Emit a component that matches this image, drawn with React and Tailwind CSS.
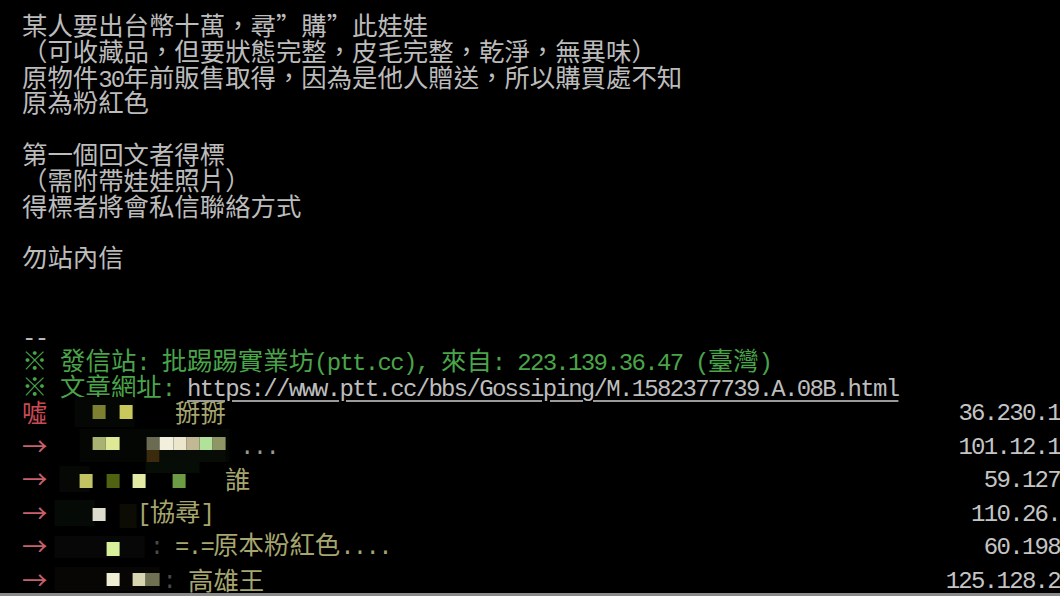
const ASCII = /^[\x20-\x7e]+$/;

// splits a line into CJK runs and half-width ASCII runs
function T({ s }) {
  return s
    .split(/([\x20-\x7e]+)/)
    .filter(Boolean)
    .map((p, i) =>
      ASCII.test(p) ? (
        <span key={i} className="font-['Liberation_Mono',monospace] text-[24px] tracking-[-1.7px]">
          {p}
        </span>
      ) : (
        <span key={i}>{p}</span>
      )
    );
}

const Line = ({ s, className = "" }) => (
  <div className={`h-[25.8px] whitespace-pre ${className}`}>{s ? <T s={s} /> : null}</div>
);

const body = [
  "某人要出台幣十萬，尋”購”此娃娃",
  "（可收藏品，但要狀態完整，皮毛完整，乾淨，無異味）",
  "原物件30年前販售取得，因為是他人贈送，所以購買處不知",
  "原為粉紅色",
  "",
  "第一個回文者得標",
  "（需附帶娃娃照片）",
  "得標者將會私信聯絡方式",
  "",
  "勿站內信",
  "",
  "",
];

// mosaic blocks over the user ids: [pageX, y, w, h, colour]
const pushes = [
  {
    tag: "噓",
    tagColor: "text-[#c84a55]",
    end: 175,
    blocks: [
      [75, 2, 60, 30, "#040704"],
      [93, 10, 13, 14, "#7c8030"],
      [120, 10, 13, 14, "#c8c85c"],
    ],
    colon: "",
    text: "掰掰",
    textColor: "text-[#a6a66e]",
    ip: "36.230.1",
  },
  {
    tag: "→",
    tagColor: "text-[#c8606e]",
    end: 240,
    blocks: [
      [80, 0, 150, 34, "#040604"],
      [93, 8, 13, 13, "#a9b272"],
      [106, 8, 14, 13, "#dfe894"],
      [147, 8, 13, 13, "#6b6b52"],
      [160, 8, 14, 13, "#f2f0dc"],
      [174, 8, 13, 13, "#ece6cc"],
      [187, 8, 13, 13, "#c2b894"],
      [200, 8, 13, 13, "#b2e29a"],
      [213, 8, 13, 13, "#8e9666"],
      [147, 21, 13, 13, "#3a2a0e"],
      [160, 21, 66, 13, "#080c06"],
    ],
    colon: "",
    text: "...",
    textColor: "text-[#9a9a8a]",
    ip: "101.12.1",
  },
  {
    tag: "→",
    tagColor: "text-[#c8606e]",
    end: 225,
    blocks: [
      [60, 4, 30, 26, "#050805"],
      [146, 0, 54, 11, "#060c06"],
      [80, 12, 13, 14, "#c2c464"],
      [107, 12, 13, 14, "#4e6212"],
      [133, 12, 13, 14, "#e2eaa6"],
      [173, 12, 13, 14, "#6c9c44"],
    ],
    colon: "",
    text: "誰",
    textColor: "text-[#a6a66e]",
    ip: "59.127",
  },
  {
    tag: "→",
    tagColor: "text-[#c8606e]",
    end: 137,
    blocks: [
      [55, 4, 40, 26, "#060a06"],
      [93, 12, 13, 13, "#dedccc"],
      [120, 8, 17, 24, "#0c0c05"],
    ],
    colon: "",
    text: "[協尋]",
    textColor: "text-[#a6a66e]",
    ip: "110.26.",
  },
  {
    tag: "→",
    tagColor: "text-[#c8606e]",
    end: 149.7,
    blocks: [
      [55, 6, 90, 22, "#070707"],
      [107, 12, 13, 14, "#d8f09a"],
    ],
    colon: ": ",
    text: "=.=原本粉紅色....",
    textColor: "text-[#a6a66e]",
    ip: "60.198",
  },
  {
    tag: "→",
    tagColor: "text-[#c8606e]",
    end: 162.6,
    blocks: [
      [55, 4, 105, 24, "#070605"],
      [107, 10, 13, 13, "#eeeed2"],
      [133, 10, 13, 13, "#d8d6b0"],
      [146, 10, 14, 13, "#707052"],
    ],
    colon: ": ",
    text: "高雄王",
    textColor: "text-[#a6a66e]",
    ip: "125.128.2",
  },
];

const Mosaic = ({ end, blocks }) => {
  const w = end - 47.4;
  return (
    <svg width={w} height="33.6" className="shrink-0">
      {blocks.map(([x, y, bw, bh, c], i) => (
        <rect key={i} x={x - 47.4} y={y} width={bw} height={bh} fill={c} />
      ))}
    </svg>
  );
};

function PushRow({ p }) {
  return (
    <div className="flex items-center h-[33.6px] whitespace-pre">
      <span className={`w-[25.4px] shrink-0 ${p.tagColor}`}>{p.tag}</span>
      <Mosaic end={p.end} blocks={p.blocks} />
      {p.colon ? (
        <span className="text-[#4a4a4a]">
          <T s={p.colon} />
        </span>
      ) : null}
      <span className={p.textColor}>
        <T s={p.text} />
      </span>
      <span className="ml-auto text-[#c4c4c4]">
        <T s={p.ip} />
      </span>
    </div>
  );
}

export default function App() {
  return (
    <div className="w-[1060px] h-[596px] overflow-hidden bg-black border-b-[3px] border-[#8a8a8a] pl-[22px] pt-[12px] font-['Noto_Sans_CJK_TC','Noto_Sans_CJK_SC',sans-serif] text-[25.4px] leading-[25.8px] text-[#bcbcbc]">
      {body.map((s, i) => (
        <Line key={i} s={s} />
      ))}
      <Line s="--" />
      <Line s="※ 發信站: 批踢踢實業坊(ptt.cc), 來自: 223.139.36.47 (臺灣)" className="text-[#4aa44a]" />
      <div className="h-[25.8px] whitespace-pre">
        <span className="text-[#4aa44a]">
          <T s="※ 文章網址: " />
        </span>
        <span className="text-[#bdbdbd] underline decoration-[#9a9a9a] underline-offset-[4px]">
          <T s="https://www.ptt.cc/bbs/Gossiping/M.1582377739.A.08B.html" />
        </span>
      </div>
      <div className="mt-[-3.8px]">
        {pushes.map((p, i) => (
          <PushRow key={i} p={p} />
        ))}
      </div>
    </div>
  );
}
